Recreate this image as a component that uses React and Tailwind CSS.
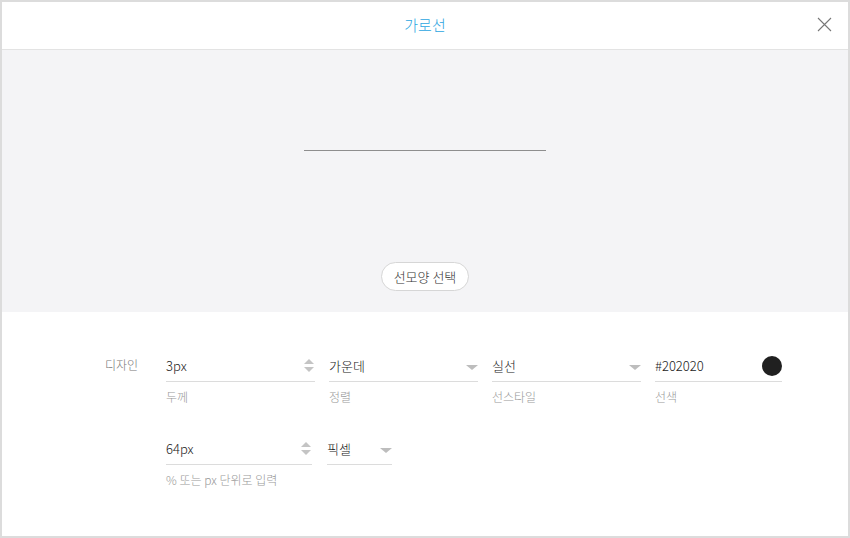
const font = { fontFamily: '"Noto Sans CJK KR", "Noto Sans", sans-serif' }

function Spinner() {
  return (
    <div className="flex flex-col items-center gap-[3px] pr-[1px]">
      <span className="w-0 h-0 border-l-[5px] border-r-[5px] border-b-[5px] border-l-transparent border-r-transparent border-b-[#c4c4c4]" />
      <span className="w-0 h-0 border-l-[5px] border-r-[5px] border-t-[5px] border-l-transparent border-r-transparent border-t-[#c4c4c4]" />
    </div>
  )
}

function Caret() {
  return (
    <span className="mt-[3px] w-0 h-0 border-l-[6px] border-r-[6px] border-t-[5px] border-l-transparent border-r-transparent border-t-[#bdbdbd]" />
  )
}

function Field({ value, label, right, width }) {
  return (
    <div className={width}>
      <div className="flex h-[32px] items-center justify-between border-b border-[#dcdcdc]">
        <span className="text-[13px] text-[#222]">{value}</span>
        {right}
      </div>
      {label && <div className="pt-[6px] text-[12px] text-[#999]">{label}</div>}
    </div>
  )
}

export default function App() {
  return (
    <div style={font} className="flex h-[538px] w-[850px] flex-col border-2 border-[#dcdcdc] bg-white font-light">
      <div className="relative flex h-[48px] shrink-0 items-center justify-center border-b border-[#e3e3e3]">
        <span className="text-[15px] text-[#2ba6e1]">가로선</span>
        <button className="absolute right-[15px] top-[14px] p-[1px]">
          <svg width="15" height="15" viewBox="0 0 15 15" fill="none" stroke="#777" strokeWidth="1.1">
            <path d="M1 1L14 14M14 1L1 14" />
          </svg>
        </button>
      </div>

      <div className="flex h-[262px] shrink-0 flex-col items-center bg-[#f4f4f6]">
        <div className="mt-[100px] h-px w-[242px] bg-[#8e8e8e]" />
        <button className="mt-[111px] h-[29px] w-[88px] rounded-full border border-[#d6d6d6] bg-white text-[13px] text-[#333]">
          선모양 선택
        </button>
      </div>

      <div className="flex flex-1 pl-[103px] pt-[38px]">
        <div className="w-[61px] pt-[6px] text-[12px] text-[#777]">디자인</div>
        <div className="flex flex-col gap-[27px]">
          <div className="flex gap-[14px]">
            <Field value="3px" label="두께" width="w-[149px]" right={<Spinner />} />
            <Field value="가운데" label="정렬" width="w-[149px]" right={<Caret />} />
            <Field value="실선" label="선스타일" width="w-[149px]" right={<Caret />} />
            <Field
              value="#202020"
              label="선색"
              width="w-[127px]"
              right={<span className="h-[20px] w-[20px] rounded-full bg-[#202020]" />}
            />
          </div>
          <div className="flex gap-[15px]">
            <Field value="64px" label="% 또는 px 단위로 입력" width="w-[146px]" right={<Spinner />} />
            <Field value="픽셀" width="w-[65px]" right={<Caret />} />
          </div>
        </div>
      </div>
    </div>
  )
}
